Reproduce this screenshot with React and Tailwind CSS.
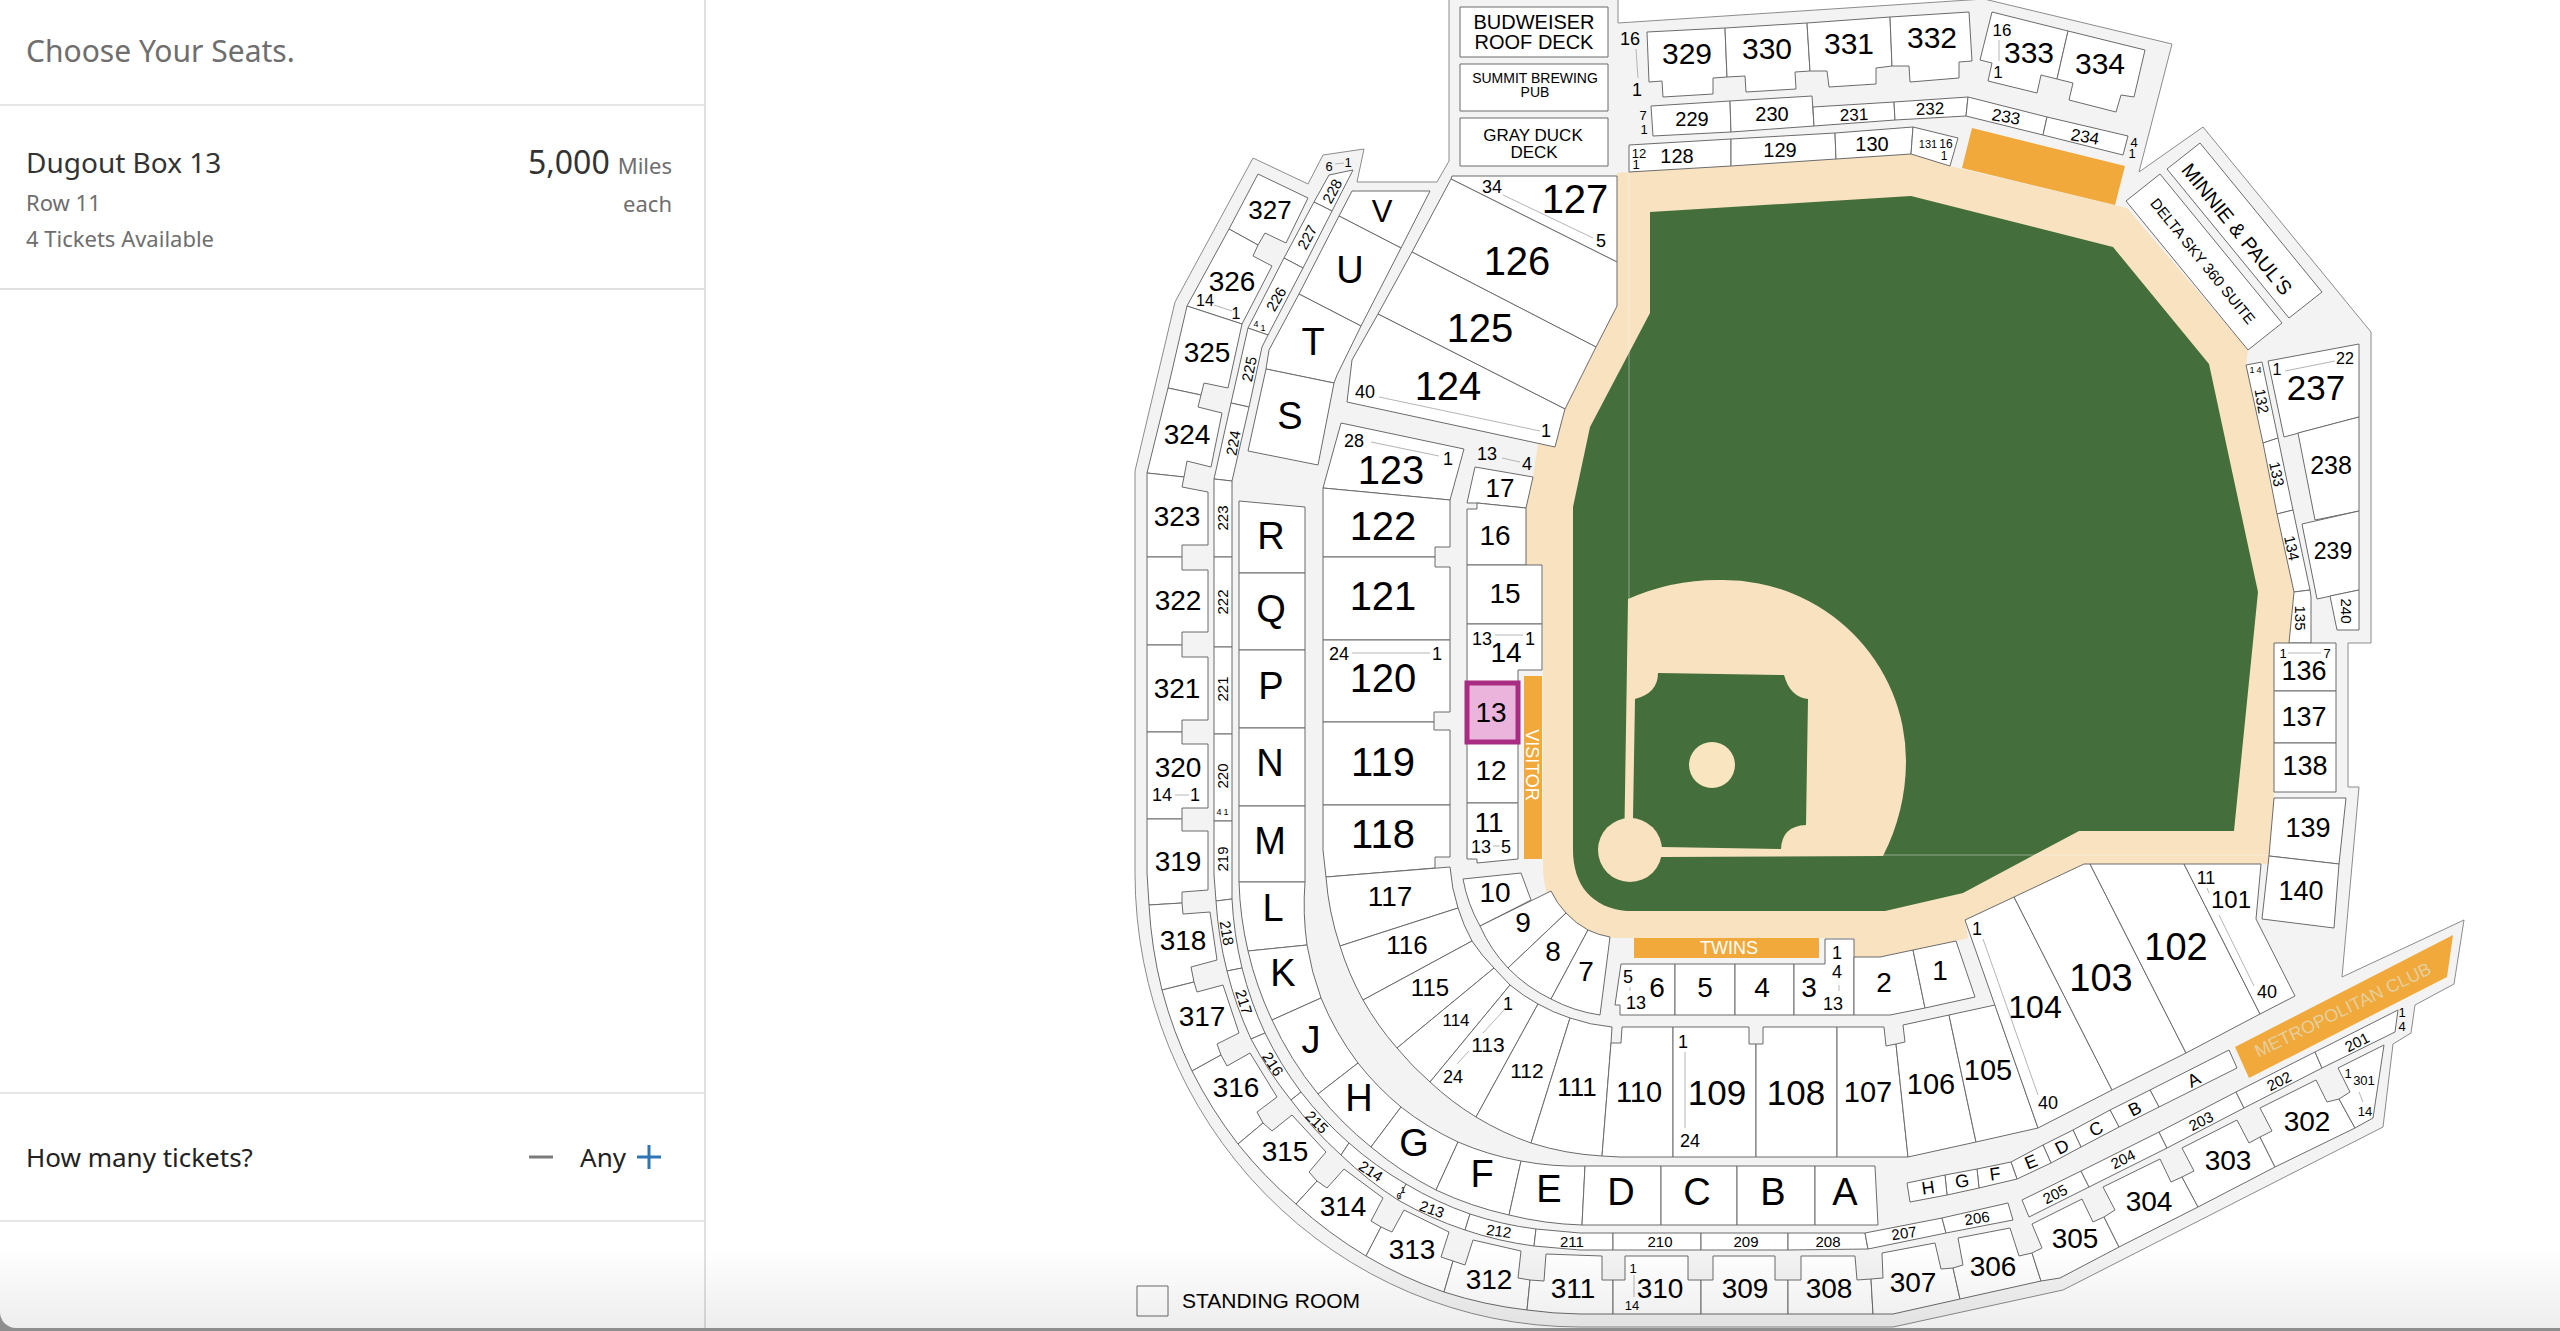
import { useState } from "react";

// [label, font size, center x, center y, rotation, outline]
const upperDeck = [
  ["327", 26, 1270, 210, 0, "M1258 174L1308 198 1286 243 1265 233 1258 245 1229 229Z"],
  ["326", 28, 1232, 281, 0, "M1229 229L1258 245 1253 256 1272 266 1242 324 1187 306Z"],
  ["325", 28, 1207, 352, 0, "M1187 306L1242 324 1228 388 1204 383 1201 395 1168 388Z"],
  ["324", 28, 1187, 434, 0, "M1168 388L1201 395 1198 407 1222 413 1211 467 1187 461 1184 477 1147 473Z"],
  ["323", 28, 1177, 516, 0, "M1147 473L1184 477 1182 487 1208 492 1208 545 1182 545 1182 557 1147 557Z"],
  ["322", 28, 1178, 600, 0, "M1147 557L1182 557 1182 570 1208 570 1208 632 1182 632 1182 645 1147 645Z"],
  ["321", 28, 1177, 688, 0, "M1147 645L1182 645 1182 657 1208 657 1208 720 1182 720 1182 732 1147 732Z"],
  ["320", 28, 1178, 767, 0, "M1147 732L1182 732 1182 744 1208 744 1208 808 1182 808 1182 819 1147 819Z"],
  ["319", 28, 1178, 861, 0, "M1147 819L1182 819 1182 831 1208 831 1208 890 1182 892 1182 903 1149 905 1147 873Z"],
  ["318", 28, 1183, 940, 0, "M1149 905L1182 903 1183 914 1210 912 1217 960 1191 967 1194 982 1162 990A433 441 0 0 1 1149 905Z"],
  ["317", 28, 1202, 1016, 0, "M1162 990L1194 982 1197 992 1223 985 1239 1033 1217 1044 1221 1055 1192 1071A433 441 0 0 1 1162 990Z"],
  ["316", 28, 1236, 1087, 0, "M1192 1071L1221 1055 1227 1066 1250 1053 1277 1097 1257 1112 1263 1123 1238 1144A433 441 0 0 1 1192 1071Z"],
  ["315", 28, 1285, 1151, 0, "M1238 1144L1263 1123 1272 1131 1292 1115 1326 1152 1309 1172 1317 1181 1296 1204A433 441 0 0 1 1238 1144Z"],
  ["314", 28, 1343, 1206, 0, "M1296 1204L1317 1181 1327 1188 1344 1169 1383 1198 1371 1221 1381 1227 1366 1256A433 441 0 0 1 1296 1204Z"],
  ["313", 28, 1412, 1249, 0, "M1366 1256L1381 1227 1392 1232 1404 1210 1449 1232 1441 1257 1453 1261 1444 1292A433 441 0 0 1 1366 1256Z"],
  ["312", 28, 1489, 1279, 0, "M1444 1292L1453 1261 1465 1265 1473 1240 1521 1251 1518 1278 1530 1280 1527 1310A433 441 0 0 1 1444 1292Z"],
  ["311", 28, 1573, 1288, 0, "M1527 1310L1530 1280 1544 1281 1546 1254 1602 1256 1602 1280 1613 1280 1613 1314 1580 1314A433 441 0 0 1 1527 1310Z"],
  ["310", 28, 1660, 1288, 0, "M1613 1314L1613 1280 1625 1280 1625 1256 1688 1256 1688 1280 1701 1280 1701 1314Z"],
  ["309", 28, 1745, 1288, 0, "M1701 1314L1701 1280 1713 1280 1713 1256 1775 1256 1775 1280 1788 1280 1788 1314Z"],
  ["308", 28, 1829, 1288, 0, "M1788 1314L1788 1280 1801 1280 1801 1256 1855 1256 1857 1280 1871 1279 1873 1314Z"],
  ["307", 28, 1913, 1282, 0, "M1873 1314L1871 1279 1883 1278 1882 1253 1935 1243 1941 1269 1953 1268 1960 1299 1893 1314Z"],
  ["306", 28, 1993, 1266, 0, "M1960 1299L1953 1268 1963 1265 1958 1238 2010 1228 2019 1256 2032 1253 2041 1281Z"],
  ["305", 28, 2075, 1238, 0, "M2041 1281L2032 1253 2042 1248 2032 1224 2082 1199 2093 1222 2104 1217 2119 1247 2060 1278Z"],
  ["304", 28, 2149, 1201, 0, "M2119 1247L2104 1217 2115 1210 2103 1187 2160 1159 2171 1182 2182 1177 2198 1207Z"],
  ["303", 28, 2228, 1160, 0, "M2198 1207L2182 1177 2194 1171 2182 1148 2237 1120 2249 1143 2260 1137 2275 1167Z"],
  ["302", 28, 2307, 1121, 0, "M2275 1167L2260 1137 2272 1131 2260 1108 2316 1080 2327 1102 2339 1099 2355 1128Z"],
  ["301", 13, 2364, 1080, 0, "M2355 1128L2339 1099 2350 1092 2338 1068 2384 1045 2373 1118Z"],
  ["329", 30, 1687, 53, 0, "M1647 32L1725 28 1727 77 1713 78 1713 94 1663 97 1662 81 1649 82Z"],
  ["330", 30, 1767, 48, 0, "M1725 28L1807 23 1810 71 1795 72 1796 89 1746 92 1745 76 1727 77Z"],
  ["331", 30, 1849, 43, 0, "M1807 23L1890 17 1892 66 1876 68 1876 84 1829 87 1827 71 1810 71Z"],
  ["332", 30, 1932, 37, 0, "M1890 17L1969 12 1972 61 1959 62 1959 78 1910 82 1909 66 1892 66Z"],
  ["333", 30, 2029, 52, 0, "M1992 12L2068 31 2057 79 2041 75 2037 93 1988 81 1992 63 1980 60Z"],
  ["334", 30, 2100, 63, 0, "M2068 31L2145 50 2134 97 2121 95 2116 112 2069 100 2073 83 2057 79Z"],
];

const clubLevel = [
  ["228", 15, 1332, 191, -62, "M1353 170L1329 175 1314 202 1332 211Z"],
  ["227", 15, 1307, 237, -62, "M1314 202L1332 211 1303 268 1284 258Z"],
  ["226", 15, 1276, 299, -60, "M1284 258L1303 268 1268 335 1248 328Z"],
  ["225", 15, 1249, 369, -78, "M1248 328L1268 335 1262 347 1249 407 1231 403Z"],
  ["224", 15, 1233, 443, -80, "M1231 403L1249 407 1232 481 1214 479Z"],
  ["223", 15, 1222, 518, -90, "M1214 479L1232 481 1232 557 1214 557Z"],
  ["222", 15, 1222, 602, -90, "M1214 557L1232 557 1232 647 1214 647Z"],
  ["221", 15, 1222, 689, -90, "M1214 647L1232 647 1232 734 1214 734Z"],
  ["220", 15, 1222, 776, -90, "M1214 734L1232 734 1232 821 1214 821Z"],
  ["219", 15, 1222, 859, -90, "M1214 821L1232 821 1232 899 1216 901 1214 875Z"],
  ["218", 15, 1227, 933, 80, "M1216 901L1232 899A348 360 0 0 0 1242 968L1227 971A366 376 0 0 1 1216 901Z"],
  ["217", 15, 1244, 1002, 72, "M1227 971L1242 968A348 360 0 0 0 1265 1033L1251 1039A366 376 0 0 1 1227 971Z"],
  ["216", 15, 1273, 1064, 57, "M1251 1039L1265 1033A348 360 0 0 0 1301 1092L1291 1100A366 376 0 0 1 1251 1039Z"],
  ["215", 15, 1317, 1122, 45, "M1291 1100L1301 1092A348 360 0 0 0 1349 1143L1341 1155A366 376 0 0 1 1291 1100Z"],
  ["214", 15, 1371, 1171, 33, "M1341 1155L1349 1143A348 360 0 0 0 1406 1184L1398 1200A366 376 0 0 1 1341 1155Z"],
  ["213", 15, 1432, 1209, 20, "M1398 1200L1406 1184A348 360 0 0 0 1470 1214L1465 1230A366 376 0 0 1 1398 1200Z"],
  ["212", 15, 1499, 1231, 8, "M1465 1230L1470 1214A348 360 0 0 0 1536 1229L1534 1246A366 376 0 0 1 1465 1230Z"],
  ["211", 15, 1572, 1241, 0, "M1534 1246L1536 1229 1580 1233 1613 1233 1613 1250 1580 1250Z"],
  ["210", 15, 1660, 1241, 0, "M1613 1233L1701 1233 1701 1250 1613 1250Z"],
  ["209", 15, 1746, 1241, 0, "M1701 1233L1788 1233 1788 1250 1701 1250Z"],
  ["208", 15, 1828, 1241, 0, "M1788 1233L1865 1233 1868 1249 1788 1250Z"],
  ["207", 15, 1904, 1233, -8, "M1865 1233L1942 1218 1946 1233 1868 1249Z"],
  ["206", 15, 1977, 1218, -8, "M1942 1218L2008 1203 2013 1220 1946 1233Z"],
  ["205", 15, 2055, 1194, -27, "M2022 1200L2081 1171 2089 1187 2029 1217Z"],
  ["204", 15, 2123, 1159, -27, "M2081 1171L2159 1132 2167 1148 2089 1187Z"],
  ["203", 15, 2201, 1121, -27, "M2159 1132L2236 1092 2244 1108 2167 1148Z"],
  ["202", 15, 2279, 1081, -27, "M2236 1092L2315 1052 2322 1068 2244 1108Z"],
  ["201", 15, 2357, 1042, -27, "M2315 1052L2398 1010 2395 1032 2322 1068Z"],
  ["229", 20, 1692, 119, 0, "M1651 106L1730 101 1731 132 1653 136Z"],
  ["230", 20, 1772, 114, 0, "M1730 101L1812 96 1814 126 1731 132Z"],
  ["231", 17, 1854, 115, -2, "M1813 107L1894 102 1895 120 1814 126Z"],
  ["232", 17, 1930, 109, -2, "M1894 102L1968 97 1966 116 1895 120Z"],
  ["233", 17, 2006, 117, 10, "M1968 97L2047 117 2043 135 1966 116Z"],
  ["234", 17, 2085, 137, 10, "M2047 117L2128 136 2123 155 2043 135Z"],
  ["237", 35, 2316, 387, 0, "M2268 361L2359 344 2359 417 2284 437Z"],
  ["238", 25, 2331, 465, 0, "M2298 433L2359 417 2359 511 2315 520Z"],
  ["239", 23, 2333, 551, 0, "M2302 524L2359 511 2359 590 2317 599Z"],
  ["240", 15, 2346, 611, 90, "M2330 596L2359 590 2359 630 2337 630Z"],
];

const terrace = [
  ["V", 31, 1382, 211, 0, "M1352 191L1430 191 1401 248 1339 216Z"],
  ["U", 38, 1350, 270, 0, "M1339 216L1401 248 1361 326 1299 294Z"],
  ["T", 38, 1313, 342, 0, "M1299 294L1361 326 1337 375 1334 383 1266 369 1269 350Z"],
  ["S", 38, 1290, 416, 0, "M1266 369L1334 383 1318 465 1248 451Z"],
  ["R", 38, 1271, 536, 0, "M1239 501L1305 507 1305 573 1239 573Z"],
  ["Q", 38, 1271, 609, 0, "M1239 573L1305 573 1305 650 1239 650Z"],
  ["P", 38, 1271, 686, 0, "M1239 650L1305 650 1305 728 1239 728Z"],
  ["N", 38, 1270, 763, 0, "M1239 728L1305 728 1305 806 1239 806Z"],
  ["M", 38, 1270, 841, 0, "M1239 806L1305 806 1305 882 1239 882Z"],
  ["L", 38, 1273, 908, 0, "M1239 882L1305 882A290 290 0 0 0 1307 945L1248 951A345 345 0 0 1 1239 882Z"],
  ["K", 38, 1283, 973, 0, "M1248 951L1307 945A290 290 0 0 0 1321 998L1272 1020A345 345 0 0 1 1248 951Z"],
  ["J", 38, 1311, 1040, 0, "M1272 1020L1321 998A290 290 0 0 0 1358 1063L1318 1094A345 345 0 0 1 1272 1020Z"],
  ["H", 38, 1359, 1098, 0, "M1318 1094L1358 1063A290 290 0 0 0 1401 1107L1371 1147A345 345 0 0 1 1318 1094Z"],
  ["G", 38, 1414, 1143, 0, "M1371 1147L1401 1107A290 290 0 0 0 1458 1142L1436 1190A345 345 0 0 1 1371 1147Z"],
  ["F", 38, 1482, 1174, 0, "M1436 1190L1458 1142A290 290 0 0 0 1521 1161L1509 1215A345 345 0 0 1 1436 1190Z"],
  ["E", 38, 1549, 1189, 0, "M1509 1215L1521 1161A290 290 0 0 0 1585 1166L1582 1225A345 345 0 0 1 1509 1215Z"],
  ["D", 38, 1621, 1192, 0, "M1585 1166L1661 1166 1661 1225 1582 1225Z"],
  ["C", 38, 1697, 1192, 0, "M1661 1166L1737 1166 1737 1225 1661 1225Z"],
  ["B", 38, 1773, 1192, 0, "M1737 1166L1815 1166 1815 1225 1737 1225Z"],
  ["A", 38, 1845, 1192, 0, "M1815 1166L1875 1166 1878 1225 1815 1225Z"],
  ["A", 18, 2194, 1080, -27, "M2150 1090L2229 1050 2237 1068 2159 1107Z"],
  ["B", 18, 2135, 1109, -27, "M2110 1110L2150 1090 2159 1107 2119 1127Z"],
  ["C", 18, 2096, 1129, -27, "M2073 1130L2110 1110 2119 1127 2081 1147Z"],
  ["D", 18, 2062, 1147, -27, "M2043 1145L2073 1130 2081 1147 2051 1163Z"],
  ["E", 18, 2031, 1162, -22, "M2011 1162L2043 1145 2051 1163 2017 1179Z"],
  ["F", 18, 1995, 1174, -8, "M1977 1169L2011 1162 2017 1179 1979 1188Z"],
  ["G", 18, 1962, 1181, -8, "M1945 1175L1977 1169 1979 1188 1947 1195Z"],
  ["H", 18, 1928, 1188, -8, "M1907 1183L1945 1175 1947 1195 1910 1202Z"],
];

const fieldLevel = [
  ["127", 40, 1575, 199, 0, "M1452 176L1617 176 1617 262 1451 179Z"],
  ["126", 40, 1517, 261, 0, "M1451 179L1617 262 1617 306 1596 347 1412 252Z"],
  ["125", 40, 1480, 328, 0, "M1412 252L1596 347 1565 409 1378 314Z"],
  ["124", 40, 1448, 386, 0, "M1378 314L1565 409 1562 420 1555 447 1347 402 1352 360Z"],
  ["123", 40, 1391, 470, 0, "M1341 423L1464 449 1450 500 1323 488Z"],
  ["122", 40, 1383, 526, 0, "M1323 488L1450 500 1450 547 1435 547 1435 557 1323 557Z"],
  ["121", 40, 1383, 596, 0, "M1323 557L1435 557 1435 567 1450 567 1450 640 1323 640Z"],
  ["120", 40, 1383, 678, 0, "M1323 640L1450 640 1450 712 1434 712 1434 722 1323 722Z"],
  ["119", 40, 1383, 762, 0, "M1323 722L1434 722 1434 730 1450 730 1450 805 1323 805Z"],
  ["118", 40, 1383, 834, 0, "M1323 805L1450 805 1450 857 1435 857 1435 868 1326 877 1323 850Z"],
  ["117", 28, 1390, 896, 0, "M1326 877L1450 867A175 175 0 0 0 1458 908L1340 946A285 285 0 0 1 1326 877Z"],
  ["116", 26, 1407, 945, 0, "M1340 946L1458 908A175 175 0 0 0 1472 941L1363 1000A285 285 0 0 1 1340 946Z"],
  ["115", 24, 1430, 987, 0, "M1363 1000L1472 941A175 175 0 0 0 1494 968L1397 1048A285 285 0 0 1 1363 1000Z"],
  ["114", 17, 1456, 1020, 0, "M1397 1048L1494 968 1510 985 1430 1082A285 285 0 0 1 1397 1048Z"],
  ["113", 21, 1488, 1044, 0, "M1430 1082L1510 985A175 175 0 0 0 1538 1004L1476 1117A285 285 0 0 1 1430 1082Z"],
  ["112", 21, 1527, 1070, 0, "M1476 1117L1538 1004A175 175 0 0 0 1570 1018L1531 1143A285 285 0 0 1 1476 1117Z"],
  ["111", 26, 1577, 1087, 0, "M1531 1143L1570 1018A175 175 0 0 0 1612 1027L1611 1043 1602 1156A285 285 0 0 1 1531 1143Z"],
  ["110", 29, 1639, 1092, 0, "M1611 1043L1621 1043 1622 1027 1673 1027 1673 1157 1620 1157 1602 1156Z"],
  ["109", 35, 1717, 1092, 0, "M1673 1027L1749 1027 1749 1044 1756 1044 1756 1157 1673 1157Z"],
  ["108", 35, 1796, 1092, 0, "M1756 1044L1763 1044 1763 1027 1837 1027 1837 1157 1756 1157Z"],
  ["107", 29, 1868, 1092, 0, "M1837 1027L1884 1027 1886 1046 1896 1044 1908 1157 1837 1157Z"],
  ["106", 29, 1931, 1084, 0, "M1896 1044L1905 1042 1903 1025 1949 1015 1976 1142 1908 1157Z"],
  ["105", 29, 1988, 1070, 0, "M1949 1015L1995 1005 2038 1128 1976 1142Z"],
  ["104", 32, 2035, 1007, 0, "M1965 920L2014 897 2112 1090 2038 1128Z"],
  ["103", 38, 2101, 978, 0, "M2014 897L2084 864 2090 864 2186 1053 2112 1090Z"],
  ["102", 38, 2176, 947, 0, "M2090 864L2184 864 2260 1014 2186 1053Z"],
  ["101", 24, 2231, 899, 0, "M2184 864L2261 864 2256 919 2295 996 2260 1014Z"],
  ["128", 20, 1677, 156, 0, "M1629 145L1731 139 1731 166 1629 172Z"],
  ["129", 20, 1780, 150, 0, "M1731 139L1835 133 1836 159 1731 166Z"],
  ["130", 20, 1872, 144, 0, "M1835 133L1913 127 1911 154 1836 159Z"],
  ["131", 11, 1928, 144, 0, "M1913 127L1958 138 1950 166 1911 154Z"],
  ["132", 15, 2262, 401, 80, "M2246 365L2262 362 2278 438 2263 443Z"],
  ["133", 15, 2277, 474, 78, "M2263 443L2278 438 2293 510 2277 514Z"],
  ["134", 15, 2292, 548, 78, "M2277 514L2293 510 2310 590 2294 592Z"],
  ["135", 15, 2300, 618, 90, "M2294 592L2310 590 2311 597 2311 643 2289 643Z"],
  ["136", 27, 2304, 671, 0, "M2274 643L2336 643 2336 691 2274 691Z"],
  ["137", 27, 2304, 717, 0, "M2274 691L2336 691 2336 743 2274 743Z"],
  ["138", 27, 2305, 766, 0, "M2274 743L2336 743 2336 792 2274 792Z"],
  ["139", 27, 2308, 828, 0, "M2274 798L2346 798 2339 864 2269 856Z"],
  ["140", 27, 2301, 891, 0, "M2269 856L2339 864 2334 928 2262 919Z"],
];

const dugoutBoxes = [
  ["17", 26, 1500, 488, 0, "M1475 467L1533 477 1526 508 1477 503 1467 503Z"],
  ["16", 28, 1495, 535, 0, "M1467 509L1477 509 1477 503 1526 508 1526 565 1467 565Z"],
  ["15", 28, 1505, 593, 0, "M1467 565L1542 565 1542 624 1467 624Z"],
  ["14", 28, 1506, 652, 0, "M1467 624L1542 624 1542 670 1518 670 1518 683 1467 683Z"],
  ["12", 28, 1491, 770, 0, "M1467 742L1518 742 1518 803 1467 803Z"],
  ["11", 28, 1489, 822, 0, "M1467 803L1518 803 1518 859 1477 863 1477 859 1467 859Z"],
  ["10", 28, 1495, 892, 0, "M1463 879L1521 873 1531 900 1480 926A150 150 0 0 1 1463 879Z"],
  ["9", 28, 1523, 922, 0, "M1480 926L1551 891A80 80 0 0 0 1566 913L1508 968A150 150 0 0 1 1480 926Z"],
  ["8", 28, 1553, 951, 0, "M1508 968L1566 913A80 80 0 0 0 1588 930L1551 999A150 150 0 0 1 1508 968Z"],
  ["7", 28, 1586, 971, 0, "M1551 999L1588 930A80 80 0 0 0 1610 937L1600 1015A150 150 0 0 1 1551 999Z"],
  ["6", 28, 1657, 987, 0, "M1621 964L1675 964 1675 1015 1620 1015 1620 1005 1615 1005Z"],
  ["5", 28, 1705, 987, 0, "M1675 964L1735 964 1735 1015 1675 1015Z"],
  ["4", 28, 1762, 987, 0, "M1735 964L1794 964 1794 1015 1735 1015Z"],
  ["3", 28, 1809, 987, 0, "M1794 964L1825 964 1825 939 1854 939 1854 1015 1794 1015Z"],
  ["2", 28, 1884, 982, 0, "M1854 957L1880 957 1913 950 1925 1008 1890 1015 1854 1015Z"],
  ["1", 28, 1940, 970, 0, "M1913 950L1956 941 1975 997 1925 1008Z"],
  ["13", 28, 1491, 712, 0, "M1467 683L1518 683 1518 742 1467 742Z"],
];

const sections = [...upperDeck, ...clubLevel, ...terrace, ...fieldLevel];

// row numbers: [text, font size, x, y]
const rowMarks = [
  ["34", 18, 1492, 187], ["5", 18, 1601, 241], ["40", 18, 1365, 392], ["1", 18, 1546, 431],
  ["28", 18, 1354, 441], ["1", 18, 1448, 459], ["13", 18, 1487, 454], ["4", 18, 1527, 464],
  ["24", 18, 1339, 654], ["1", 18, 1437, 654], ["13", 18, 1482, 639], ["1", 18, 1530, 639],
  ["13", 18, 1481, 847], ["5", 18, 1506, 847], ["14", 16, 1205, 300], ["1", 16, 1236, 313],
  ["14", 18, 1162, 795], ["1", 18, 1195, 795], ["6", 13, 1329, 166], ["1", 13, 1348, 162],
  ["4", 9, 1256, 324], ["1", 9, 1263, 328], ["4", 9, 1219, 812], ["1", 9, 1226, 812],
  ["1", 9, 1403, 1190], ["6", 9, 1399, 1196], ["1", 18, 1508, 1004], ["24", 18, 1453, 1077],
  ["5", 18, 1628, 977], ["13", 18, 1636, 1003], ["1", 18, 1837, 953], ["4", 18, 1837, 972],
  ["13", 18, 1833, 1004], ["1", 18, 1683, 1042], ["24", 18, 1690, 1141], ["1", 18, 1977, 929],
  ["40", 18, 2048, 1103], ["11", 18, 2206, 878], ["40", 18, 2267, 992], ["1", 13, 1633, 1268],
  ["14", 13, 1632, 1305], ["16", 18, 1630, 39], ["1", 18, 1637, 90], ["7", 13, 1643, 115],
  ["1", 13, 1644, 129], ["12", 13, 1639, 153], ["1", 13, 1636, 164], ["16", 17, 2002, 30],
  ["1", 17, 1998, 72], ["16", 12, 1946, 144], ["1", 12, 1944, 156], ["4", 13, 2134, 142],
  ["1", 13, 2132, 153], ["1", 16, 2277, 369], ["22", 16, 2345, 358], ["1", 9, 2252, 370],
  ["4", 9, 2259, 370], ["1", 13, 2283, 653], ["7", 13, 2327, 653], ["1", 13, 2402, 1012],
  ["4", 13, 2402, 1026], ["1", 13, 2348, 1073], ["14", 13, 2365, 1111],
];

const rowLines =
  "M1503 195L1593 238M1379 397L1540 431M1371 442L1439 456M1502 458L1520 462M1352 653H1430M1495 635H1523M1493 846H1500M1214 305L1232 311M1175 795H1189M1335 164L1344 163M1504 1010L1483 1033M1469 1051L1457 1064M1630 987V991M1839 985V991M1685 1052V1128M1983 939L2038 1095M2207 888L2209 893M2219 915L2254 986M1634 1275V1297M1636 49L1638 78M1999 40V61M2285 371L2335 361M2288 653H2321M2359 1092L2363 1102";

const Label = ({ text, size, x, y, rotate = 0, className = "fill-black" }) => (
  <text
    x={x}
    y={y}
    fontSize={size}
    textAnchor="middle"
    dominantBaseline="central"
    transform={rotate ? `rotate(${rotate} ${x} ${y})` : undefined}
    className={className}
  >
    {text}
  </text>
);

const Section = ({ data, selected }) => {
  const [label, size, x, y, rotate, outline] = data;
  return (
    <g>
      <path
        d={outline}
        className={
          selected
            ? "fill-[#ebb4dc] stroke-[#a82c82] stroke-[5px]"
            : "fill-white stroke-[#6b6b6b] stroke-1"
        }
      />
      <Label text={label} size={size} x={x} y={y} rotate={rotate} />
    </g>
  );
};

const Field = () => (
  <g>
    <path
      className="fill-[#f8e2bf]"
      d="M1617 173L1629 172 1911 154 1950 166 2127 208 2248 350 2246 365 2277 514 2294 592 2289 643H2274V798L2268 864H2084L1965 920 1968 938 1956 941 1880 957H1854V938H1615Q1543 932 1543 865V565H1526V508L1533 477 1538 444 1555 447 1565 409 1617 306Z"
    />
    <path
      className="fill-[#446e3b]"
      d="M1650 212L1911 196 2113 247 2209 364 2258 592 2234 831H2079L1963 893 1885 911H1627C1592 908 1573 885 1573 850V507L1590 427 1650 313Z"
    />
    <path className="fill-none stroke-white/40 stroke-1" d="M1629 173V599M1883 855H2268" />
    <path
      className="fill-[#f8e2bf]"
      d="M1628 599A220 220 0 0 1 1723 580A183 181 0 0 1 1906 761A210 210 0 0 1 1883 856L1662 857H1624Z"
    />
    <path
      className="fill-[#446e3b]"
      d="M1658 673L1784 675Q1790 697 1808 699L1806 825Q1782 826 1781 849L1662 847 1633 818 1635 699Q1658 693 1658 673Z"
    />
    <circle className="fill-[#f8e2bf]" cx="1630" cy="850" r="32" />
    <circle className="fill-[#f9e5c0]" cx="1712" cy="765" r="23" />
  </g>
);

const StadiumMap = ({ selected }) => (
  <svg
    viewBox="706 0 1854 1328"
    preserveAspectRatio="xMidYMin meet"
    className="h-full w-full font-['Liberation_Sans',Arial,sans-serif]"
    role="img"
    aria-label="Seating map"
  >
    <path
      className="fill-[#f3f3f3] stroke-[#8c8c8c] stroke-1"
      d="M1449 -4V161L1437 182H1357L1364 149 1323 155 1308 184 1253 158 1175 302 1135 471V873A445 454 0 0 0 1580 1327H1893L2063 1290 2383 1127 2393 1044 2411 1033 2415 1005 2454 984 2464 920 2342 977 2359 787H2348V643H2371V332L2203 127 2139 172 2172 44 1984 -1 1618 23V-4Z"
    />
    <Field />

    {sections.map((data) => (
      <Section key={data[5]} data={data} />
    ))}
    {dugoutBoxes.map((data) => (
      <Section key={data[5]} data={data} selected={data[0] === selected} />
    ))}

    {/* clubs and decks */}
    <g className="fill-white stroke-[#6b6b6b] stroke-1">
      <path d="M1460 7H1608V57H1460ZM1460 64H1608V111H1460ZM1460 118H1608V166H1460Z" />
      <path d="M2200 143L2322 292 2289 318 2167 169ZM2160 174L2282 323 2248 350 2126 201Z" />
      <path d="M1137 1286H1168V1316H1137Z" />
    </g>
    <path
      className="fill-[#f0a93a]"
      d="M1972 128L2125 166 2115 205 1962 168ZM2235 1047L2453 935 2447 977 2249 1078ZM1524 676H1542V859H1524ZM1634 938H1819V958H1634Z"
    />
    <Label text="BUDWEISER" size={20} x={1534} y={22} />
    <Label text="ROOF DECK" size={20} x={1534} y={42} />
    <Label text="SUMMIT BREWING" size={14} x={1535} y={78} />
    <Label text="PUB" size={14} x={1535} y={92} />
    <Label text="GRAY DUCK" size={17} x={1533} y={135} />
    <Label text="DECK" size={17} x={1534} y={152} />
    <Label text="MINNIE & PAUL'S" size={20} x={2237} y={229} rotate={51} />
    <Label text="DELTA SKY 360 SUITE" size={15} x={2203} y={261} rotate={51} />
    <Label text="METROPOLITAN CLUB" size={18} x={2343} y={1010} rotate={-26} className="fill-[#e5cf9f]" />
    <Label text="VISITOR" size={18} x={1532} y={765} rotate={90} className="fill-white" />
    <Label text="TWINS" size={18} x={1729} y={948} className="fill-white" />
    <Label text="STANDING ROOM" size={21} x={1271} y={1300} />

    <path d={rowLines} className="fill-none stroke-[#b5b5b5] stroke-1" />
    {rowMarks.map(([text, size, x, y]) => (
      <Label key={`${x}-${y}`} text={text} size={size} x={x} y={y} />
    ))}
  </svg>
);

const TicketStepper = () => {
  const [tickets, setTickets] = useState(0);

  return (
    <div className="flex h-[130px] items-center justify-between border-y-2 border-[#e6e6e6] pr-8 pl-[26px] text-[26px] text-[#222]">
      <span>How many tickets?</span>
      <div className="flex items-center">
        <button
          type="button"
          aria-label="Fewer tickets"
          className="px-[11px] py-3 text-[#7a7a7a]"
          onClick={() => setTickets(Math.max(0, tickets - 1))}
        >
          <svg viewBox="0 0 24 24" className="size-6">
            <path d="M0 12H24" className="stroke-current stroke-3" />
          </svg>
        </button>
        <span className="ml-4">{tickets || "Any"}</span>
        <button
          type="button"
          aria-label="More tickets"
          className="px-[11px] py-3 text-[#2f74b5]"
          onClick={() => setTickets(Math.min(4, tickets + 1))}
        >
          <svg viewBox="0 0 24 24" className="size-6">
            <path d="M0 12H24M12 0V24" className="stroke-current stroke-3" />
          </svg>
        </button>
      </div>
    </div>
  );
};

const SeatList = () => (
  <aside className="flex w-[706px] shrink-0 flex-col border-r-2 border-[#e0e0e0] font-['Noto_Sans',sans-serif]">
    <h1 className="flex h-[106px] items-center border-b-2 border-[#e6e6e6] pb-1 pl-[26px] text-[30px] text-[#6e6e6e]">
      Choose Your Seats.
    </h1>
    <ul className="flex-1">
      <li className="flex justify-between border-b-2 border-[#e0e0e0] pt-9 pr-8 pb-8 pl-[26px] text-[22px] leading-[36px] text-[#6e6e6e]">
        <div>
          <h2 className="mb-0.5 text-[28px] leading-10 text-[#333]">Dugout Box 13</h2>
          <p>Row 11</p>
          <p>4 Tickets Available</p>
        </div>
        <div className="text-right">
          <p className="mb-0.5 flex items-baseline justify-end gap-2 leading-10">
            <span className="text-[32px] text-[#333]">5,000</span>
            <span>Miles</span>
          </p>
          <p className="-mt-0.5">each</p>
        </div>
      </li>
    </ul>
    <TicketStepper />
    <div className="h-[106px]" />
  </aside>
);

const App = () => (
  <div className="h-screen bg-[#8e8e8e] pb-[3px]">
    <div className="relative flex h-full overflow-hidden rounded-bl-2xl bg-white">
      <SeatList />
      <main className="min-w-0 flex-1">
        <StadiumMap selected="13" />
      </main>
      <div className="pointer-events-none absolute inset-x-0 bottom-0 h-20 bg-linear-to-b from-transparent to-black/7" />
    </div>
  </div>
);

export default App;
